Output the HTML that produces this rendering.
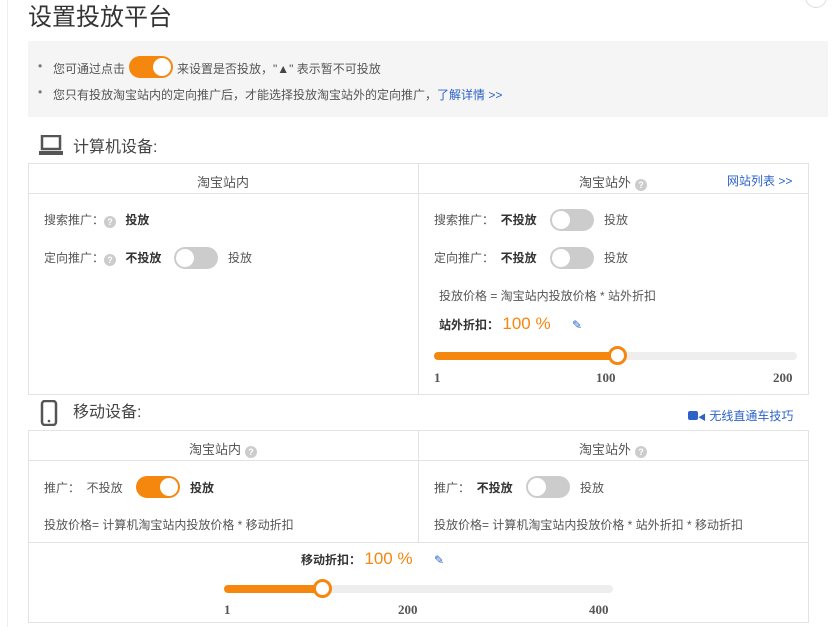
<!DOCTYPE html>
<html><head><meta charset="utf-8"><style>
*{margin:0;padding:0;box-sizing:border-box}
body{width:833px;height:627px;background:#fff;font-family:"Liberation Sans","Noto Sans CJK SC",sans-serif;font-size:12px;color:#555;position:relative;overflow:hidden}
.a{position:absolute;white-space:nowrap}
.b{font-weight:bold;color:#333}
.tg{position:absolute;width:44px;height:22px;border-radius:11px;background:#ccc}
.tg.on{background:#f5870f}
.tg i{position:absolute;top:2px;width:18px;height:18px;border-radius:50%;background:#fff}
.tg.on i{right:2px}.tg.off i{left:2px}
.q{display:inline-block;width:12px;height:12px;border-radius:50%;background:#ccc;color:#fff;font-size:9px;line-height:12px;text-align:center;font-weight:bold;vertical-align:-1px;margin-left:4px}
.bx{position:absolute;border:1px solid #e3e3e3}
.ln{position:absolute;background:#e3e3e3}
.trk{position:absolute;height:8px;border-radius:4px;background:#eee}
.fill{position:absolute;height:8px;border-radius:4px;background:#f5870f}
.hd{position:absolute;width:19px;height:19px;border-radius:50%;background:#fff;border:3px solid #f5870f}
.num{position:absolute;font-family:"Liberation Serif",serif;font-weight:bold;font-size:13px;color:#555}
.blue{color:#2d63c8}
.pct{color:#f5870f;font-size:17px}
</style></head><body>
<div class="a" style="left:7px;top:0;width:1px;height:627px;background:#eee"></div>
<div class="a" style="left:805px;top:-14px;width:22px;height:22px;border:1px solid #ddd;border-radius:50%"></div>
<div class="a" style="left:28px;top:-3px;font-size:24px;color:#333">设置投放平台</div>
<div class="a" style="left:28px;top:41px;width:800px;height:76px;background:#f5f5f5"></div>
<div class="a" style="left:38px;top:59px;color:#777">•</div>
<div class="a" style="left:53px;top:60px">您可通过点击</div>
<div class="tg on" style="left:129px;top:56px;width:44px"><i></i></div>
<div class="a" style="left:177px;top:60px">来设置是否投放，"<b style="color:#444">▲</b>" 表示暂不可投放</div>
<div class="a" style="left:38px;top:85px;color:#777">•</div>
<div class="a" style="left:53px;top:86px">您只有投放淘宝站内的定向推广后，才能选择投放淘宝站外的定向推广，<span class="blue">了解详情 &gt;&gt;</span></div>

<svg class="a" style="left:39px;top:135px" width="24" height="22"><rect x="3" y="1" width="18" height="13" fill="none" stroke="#555" stroke-width="2.5"/><rect x="0" y="16" width="24" height="4" fill="#555"/></svg>
<div class="a" style="left:73px;top:133px;font-size:16px;color:#444">计算机设备:</div>

<div class="bx" style="left:28px;top:163px;width:781px;height:232px"></div>
<div class="ln" style="left:28px;top:193px;width:781px;height:1px"></div>
<div class="ln" style="left:418px;top:163px;width:1px;height:232px"></div>
<div class="a" style="left:28px;top:172px;width:390px;text-align:center;font-size:13px">淘宝站内</div>
<div class="a" style="left:418px;top:172px;width:390px;text-align:center;font-size:13px">淘宝站外<span class="q">?</span></div>
<div class="a blue" style="left:727px;top:172px">网站列表 &gt;&gt;</div>

<div class="a" style="left:44px;top:211px">搜索推广：<span class="q" style="margin:0 6px 0 0">?</span> <span class="b">投放</span></div>
<div class="a" style="left:44px;top:249px">定向推广：<span class="q" style="margin:0 6px 0 0">?</span> <span class="b">不投放</span></div>
<div class="tg off" style="left:174px;top:247px"><i></i></div>
<div class="a" style="left:228px;top:249px">投放</div>

<div class="a" style="left:434px;top:211px">搜索推广：&nbsp; <span class="b">不投放</span></div>
<div class="tg off" style="left:550px;top:209px"><i></i></div>
<div class="a" style="left:604px;top:211px">投放</div>
<div class="a" style="left:434px;top:249px">定向推广：&nbsp; <span class="b">不投放</span></div>
<div class="tg off" style="left:550px;top:247px"><i></i></div>
<div class="a" style="left:604px;top:249px">投放</div>
<div class="a" style="left:439px;top:287px">投放价格 = 淘宝站内投放价格 * 站外折扣</div>
<div class="a" style="left:439px;top:314px"><span class="b">站外折扣：</span> <span class="pct">100 %</span></div>
<div class="a blue" style="left:572px;top:318px;font-size:12px">✎</div>
<div class="trk" style="left:434px;top:352px;width:363px"></div>
<div class="fill" style="left:434px;top:352px;width:184px"></div>
<div class="hd" style="left:608px;top:346px"></div>
<div class="num" style="left:434px;top:370px">1</div>
<div class="num" style="left:596px;top:370px">100</div>
<div class="num" style="left:773px;top:370px">200</div>

<svg class="a" style="left:40px;top:400px" width="18" height="26"><rect x="2" y="1" width="14" height="24" rx="3" fill="none" stroke="#555" stroke-width="2.5"/><circle cx="9" cy="21" r="1.3" fill="#555"/></svg>
<div class="a" style="left:73px;top:398px;font-size:16px;color:#444">移动设备:</div>
<div class="a blue" style="left:688px;top:407px"><span style="display:inline-block;width:10px;height:9px;background:#2d63c8;border-radius:2px"></span><span style="font-size:8px">◀</span> 无线直通车技巧</div>

<div class="bx" style="left:28px;top:430px;width:781px;height:193px"></div>
<div class="ln" style="left:28px;top:460px;width:781px;height:1px"></div>
<div class="ln" style="left:28px;top:542px;width:781px;height:1px"></div>
<div class="ln" style="left:418px;top:430px;width:1px;height:112px"></div>
<div class="a" style="left:28px;top:439px;width:390px;text-align:center;font-size:13px">淘宝站内<span class="q">?</span></div>
<div class="a" style="left:418px;top:439px;width:390px;text-align:center;font-size:13px">淘宝站外<span class="q">?</span></div>

<div class="a" style="left:44px;top:479px">推广：&nbsp; 不投放</div>
<div class="tg on" style="left:136px;top:476px"><i></i></div>
<div class="a b" style="left:190px;top:479px">投放</div>
<div class="a" style="left:44px;top:516px">投放价格= 计算机淘宝站内投放价格 * 移动折扣</div>

<div class="a" style="left:434px;top:479px">推广：&nbsp; <span class="b">不投放</span></div>
<div class="tg off" style="left:526px;top:476px"><i></i></div>
<div class="a" style="left:580px;top:479px">投放</div>
<div class="a" style="left:434px;top:516px">投放价格= 计算机淘宝站内投放价格 * 站外折扣 * 移动折扣</div>

<div class="a" style="left:301px;top:549px"><span class="b">移动折扣：</span> <span class="pct">100 %</span></div>
<div class="a blue" style="left:434px;top:553px">✎</div>
<div class="trk" style="left:224px;top:585px;width:389px"></div>
<div class="fill" style="left:224px;top:585px;width:99px"></div>
<div class="hd" style="left:313px;top:579px"></div>
<div class="num" style="left:224px;top:602px">1</div>
<div class="num" style="left:398px;top:602px">200</div>
<div class="num" style="left:589px;top:602px">400</div>
</body></html>
